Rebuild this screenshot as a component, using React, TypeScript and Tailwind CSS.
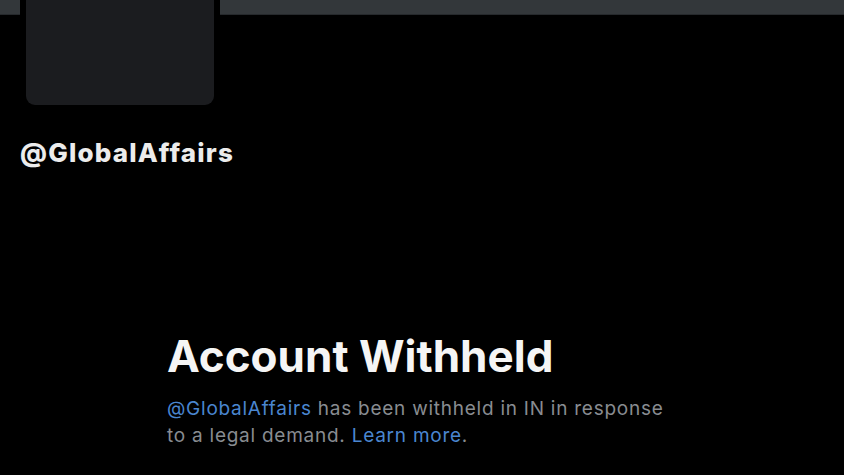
export default function App() {
  return (
    <div className="w-[844px] h-[475px] overflow-hidden bg-black text-white font-['Inter',sans-serif]">
      {/* banner + avatar */}
      <div className="h-[15px] bg-[#33373a] border-b border-[#26292c]" />
      <div className="relative h-[120px]">
        <div className="absolute left-[20px] -top-[16px] w-[200px] h-[112px] bg-black rounded-b-[12px] p-[6px] pt-0">
          <div className="w-full h-full bg-[#1b1c1f] rounded-b-[9px]" />
        </div>
      </div>
      <div className="pl-[20px] pt-[3px]">
        <h2 className="text-[26px] font-extrabold leading-[30px] tracking-[1.2px] text-[#ececec]">@GlobalAffairs</h2>
      </div>

      <div className="pl-[167px] pt-[162px]">
        <h1 className="text-[44px] font-bold leading-[52px] text-[#f5f5f5]">Account Withheld</h1>
        <p className="mt-[13px] w-[520px] text-[19px] leading-[27px] tracking-[0.75px] text-[#888c91]">
          <span className="text-[#4a86d0]">@GlobalAffairs</span> has been withheld in IN in response<br />
          to a legal demand. <span className="text-[#4a86d0]">Learn more</span>.
        </p>
      </div>
    </div>
  );
}
